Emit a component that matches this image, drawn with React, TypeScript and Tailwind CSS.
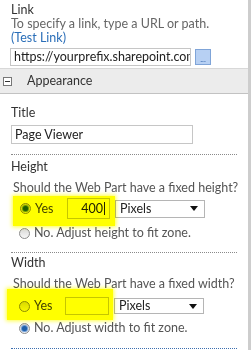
function Radio({ checked }: { checked?: boolean }) {
  return (
    <span className="flex h-[11px] w-[11px] shrink-0 items-center justify-center rounded-full border border-[#8c8c8c] bg-gradient-to-b from-[#d9d9d9] to-[#f7f7f7]">
      {checked && <span className="h-[5px] w-[5px] rounded-full bg-[#1f5fa8] shadow-[0_0_1px_1px_#5b8fd0]" />}
    </span>
  );
}

function PixelSelect({ h }: { h: string }) {
  return (
    <div className={`ml-[5px] flex w-[90px] items-center justify-between border border-[#b5b5b5] bg-white pl-[4px] pr-[6px] text-[#222] ${h}`}>
      <span>Pixels</span>
      <svg width="8" height="5" viewBox="0 0 8 5">
        <path d="M0 0 H8 L4 5 Z" fill="#111" />
      </svg>
    </div>
  );
}

function App() {
  return (
    <div className="isolate flex h-[350px] w-[251px] overflow-hidden bg-white font-['Lato','Liberation_Sans',sans-serif] text-[12.5px]">
      <div className="flex flex-1 flex-col">
        {/* Link */}
        <div className="pl-[11px] pt-[3px] pb-[2px] leading-[14px]">
          <div className="text-[#333]">Link</div>
          <div className="text-[#666]">To specify a link, type a URL or path.</div>
          <div className="text-[#2a6eb8]">(Test Link)</div>
          <div className="ml-[-1px] mt-[3px] flex items-start">
            <div className="flex h-[18px] w-[181px] items-center overflow-hidden whitespace-nowrap border border-[#c6c6c6] px-[3px] text-[#222]">
              https://yourprefix.sharepoint.com
            </div>
            <div className="ml-[4px] mt-[1px] flex h-[16px] w-[16px] items-end justify-center border border-[#7fa4d8] bg-[#b7d0f3] pb-[1px] text-[8px] leading-[8px] text-[#2b5fa8]">
              ...
            </div>
          </div>
        </div>

        {/* Appearance header */}
        <div className="flex h-[26px] items-center border-y border-t-[#d8d8d8] border-b-[#c2c2c2] bg-[#ececec]">
          <span className="ml-[3px] flex h-[9px] w-[9px] items-center justify-center border border-[#777] bg-white">
            <span className="h-px w-[5px] bg-[#333]" />
          </span>
          <span className="ml-[15px] text-[#333]">Appearance</span>
        </div>

        <div className="pl-[11px] pt-[12px] leading-[14px]">
          {/* Title */}
          <div className="text-[#333]">Title</div>
          <div className="mt-[5px] flex h-[19px] w-[182px] items-center border border-[#c6c6c6] px-[3px] text-[#222]">
            Page Viewer
          </div>
          <div className="mt-[10px] w-[226px] border-t border-dotted border-[#8a8a8a]" />

          {/* Height */}
          <div className="mt-[5px] text-[#333]">Height</div>
          <div className="mt-[7px] pl-[2px] text-[#555]">Should the Web Part have a fixed height?</div>
          <div className="relative mt-[3px] flex h-[21px] items-center">
            <div className="ml-[9px] flex w-[47px] items-center gap-[4px] text-[#444]">
              <Radio checked />
              <span>Yes</span>
            </div>
            <div className="flex h-[21px] w-[43px] items-center justify-end border border-[#c6c6c6] bg-white pr-[4px] text-[#222]">
              400<span className="ml-px h-[13px] w-px bg-[#222]" />
            </div>
            <PixelSelect h="h-[18px]" />
            <div className="pointer-events-none absolute left-[2px] top-[-2px] h-[30px] w-[102px] bg-[#ffff00] mix-blend-multiply shadow-[0_0_4px_1px_#ffff40]" />
          </div>
          <div className="mt-[7px] flex items-center gap-[4px] pl-[8px] text-[#555]">
            <Radio />
            <span>No. Adjust height to fit zone.</span>
          </div>
          <div className="mt-[12px] w-[226px] border-t border-dotted border-[#8a8a8a]" />

          {/* Width */}
          <div className="mt-[3px] text-[#333]">Width</div>
          <div className="mt-[7px] pl-[2px] text-[#555]">Should the Web Part have a fixed width?</div>
          <div className="relative mt-[6px] flex h-[18px] items-center">
            <div className="ml-[8px] flex w-[46px] items-center gap-[4px] text-[#444]">
              <Radio />
              <span>Yes</span>
            </div>
            <div className="h-[18px] w-[44px] border border-[#c6c6c6] bg-white" />
            <PixelSelect h="h-[16px]" />
            <div className="pointer-events-none absolute left-[-4px] top-[-8px] h-[31px] w-[106px] bg-[#ffff00] mix-blend-multiply shadow-[0_0_4px_1px_#ffff40]" />
          </div>
          <div className="mt-[6px] flex items-center gap-[4px] pl-[8px] text-[#555]">
            <Radio checked />
            <span>No. Adjust width to fit zone.</span>
          </div>
          <div className="mt-[13px] w-[226px] border-t border-dotted border-[#3d6fb0]" />
        </div>
      </div>
      <div className="w-[3px] bg-[#cdcdcd]" />
    </div>
  );
}

export default App;
